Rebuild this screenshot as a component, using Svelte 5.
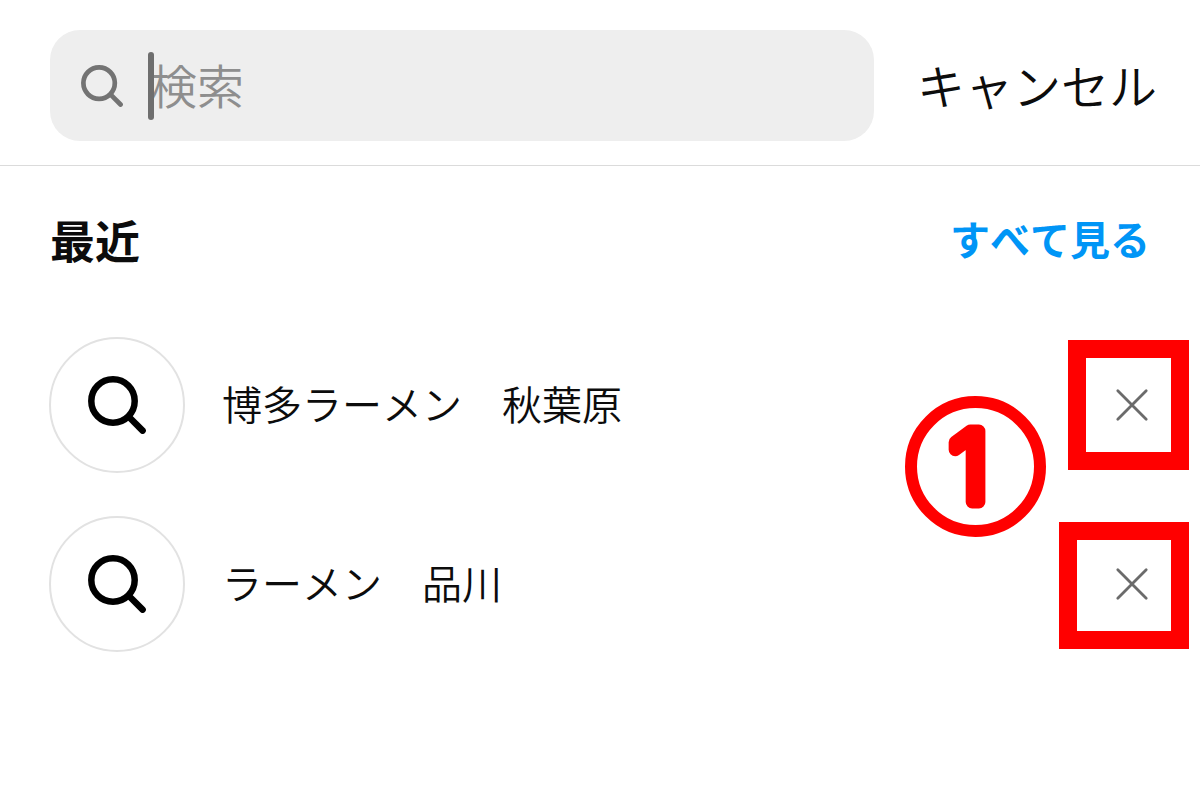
<script>
	let query = $state('');

	// size of the red frame differs a little from row to row
	let recent = $state([
		{ id: 1, text: '博多ラーメン　秋葉原', frame: 'tall', step: '1' },
		{ id: 2, text: 'ラーメン　品川', frame: 'wide', step: '' }
	]);

	function remove(id) {
		recent = recent.filter((item) => item.id !== id);
	}
</script>

{#snippet searchIcon()}
	<svg viewBox="0 0 58 58" fill="none" stroke="currentColor" stroke-width="6.5" stroke-linecap="round" aria-hidden="true">
		<circle cx="25" cy="25" r="21.7" />
		<path d="M41 41 54.6 54.6" />
	</svg>
{/snippet}

<div class="page">
	<header>
		<label class="field">
			{@render searchIcon()}
			<span class="entry">
				<input type="text" bind:value={query} placeholder="検索" aria-label="検索" />
				<span class="caret"></span>
			</span>
		</label>
		<button class="cancel" type="button" onclick={() => (query = '')}>キャンセル</button>
	</header>

	<main>
		<div class="title">
			<h2>最近</h2>
			<a href="#all">すべて見る</a>
		</div>

		<ul>
			{#each recent as item (item.id)}
				<li>
					<span class="avatar">{@render searchIcon()}</span>
					<span class="text">{item.text}</span>
					<button class="remove" type="button" aria-label="削除" onclick={() => remove(item.id)}>
						<svg viewBox="0 0 36 36" fill="none" stroke="currentColor" stroke-width="2.8" stroke-linecap="round" aria-hidden="true">
							<path d="M3.8 3.8 32.2 32.2M32.2 3.8 3.8 32.2" />
						</svg>
					</button>
					<span class="frame {item.frame}"></span>
					{#if item.step}
						<svg class="step" viewBox="0 0 141 141">
							<circle cx="70.5" cy="70.5" r="64.5" />
							<text x="64" y="106" text-anchor="middle">{item.step}</text>
						</svg>
					{/if}
				</li>
			{/each}
		</ul>
	</main>
</div>

<style>
	:global(body) {
		margin: 0;
		background: #fff;
	}
	.page {
		font-family: "Noto Sans CJK JP", sans-serif;
		font-weight: 350;
		font-kerning: none;
		color: #0c0c0c;
	}
	button {
		padding: 0;
		border: none;
		background: none;
		font-family: inherit;
		font-weight: inherit;
		color: inherit;
		cursor: pointer;
	}
	svg {
		display: block;
	}

	header {
		display: flex;
		align-items: center;
		gap: 43px;
		padding: 30px 43px 24px 50px;
		border-bottom: 1px solid #dbdbdb;
	}
	.field {
		flex: 1;
		min-width: 0;
		display: flex;
		align-items: center;
		gap: 27px;
		height: 111px;
		padding: 0 31px;
		box-sizing: border-box;
		border-radius: 30px;
		background: #eee;
		color: #737373;
	}
	.field svg {
		flex: none;
		width: 42px;
		height: 42px;
	}
	.entry {
		position: relative;
		flex: 1;
		min-width: 0;
	}
	input {
		display: block;
		width: 100%;
		height: 68px;
		padding: 0 0 4px;
		box-sizing: border-box;
		border: none;
		outline: none;
		background: none;
		font-family: inherit;
		font-weight: inherit;
		font-size: 47px;
		color: #0c0c0c;
	}
	input::placeholder {
		color: #8e8e8e;
		opacity: 1;
	}
	.caret {
		position: absolute;
		top: 0;
		left: -2px;
		width: 6px;
		height: 68px;
		border-radius: 3px;
		background: #6e6e6e;
	}
	.cancel {
		flex: none;
		padding-bottom: 4px;
		font-size: 48px;
		line-height: 68px;
	}

	.title {
		display: flex;
		align-items: center;
		justify-content: space-between;
		padding: 40px 50px 0;
	}
	h2 {
		margin: 0;
		font-size: 45px;
		line-height: 68px;
		font-weight: 700;
	}
	.title a {
		padding-bottom: 4px;
		font-size: 40px;
		line-height: 60px;
		font-weight: 700;
		color: #0095f6;
		text-decoration: none;
	}

	ul {
		display: flex;
		flex-direction: column;
		gap: 43px;
		margin: 0;
		padding: 63px 0;
		list-style: none;
	}
	li {
		position: relative;
		display: flex;
		align-items: center;
		padding: 0 50px 0 49px;
	}
	.avatar {
		flex: none;
		display: flex;
		align-items: center;
		justify-content: center;
		width: 136px;
		height: 136px;
		box-sizing: border-box;
		border: 2px solid #e2e2e2;
		border-radius: 50%;
		color: #000;
	}
	.avatar svg {
		width: 58px;
		height: 58px;
	}
	.text {
		flex: 1;
		margin-left: 37px;
		padding-bottom: 4px;
		font-size: 40px;
		line-height: 60px;
	}
	.remove {
		color: #6b6b6b;
	}
	.remove svg {
		width: 36px;
		height: 36px;
	}

	/* red marks lie over the rows */
	.frame {
		position: absolute;
		right: 11px;
		box-sizing: border-box;
		border: 18px solid #f00;
		pointer-events: none;
	}
	.tall {
		top: 3px;
		width: 121px;
		height: 130px;
	}
	.wide {
		top: 6px;
		width: 130px;
		height: 127px;
	}
	.step {
		position: absolute;
		top: 59px;
		right: 154px;
		width: 141px;
		height: 141px;
		overflow: visible;
	}
	.step circle {
		fill: none;
		stroke: #f00;
		stroke-width: 12px;
	}
	.step text {
		font-family: Inter, sans-serif;
		font-size: 98px;
		font-weight: 300;
		fill: #f00;
		stroke: #f00;
		stroke-width: 13px;
		stroke-linejoin: round;
	}
</style>
